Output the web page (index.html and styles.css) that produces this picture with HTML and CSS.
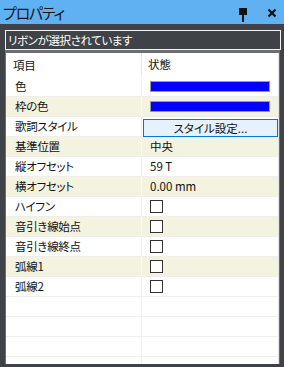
FILE: index.html
```html
<!DOCTYPE html>
<html lang="ja">
<head>
  <meta charset="UTF-8">
  <title>プロパティ</title>
  <link rel="stylesheet" href="styles.css">
</head>
<body>

<div class="titlebar">
  <span class="title">プロパティ</span>
  <span class="tools">
    <svg class="pin" width="10" height="16" viewBox="0 0 10 16">
      <rect x="1" y="1" width="8" height="7" fill="#111"/>
      <rect x="4" y="8" width="2" height="7" fill="#111"/>
    </svg>
    <svg class="close" width="10" height="10" viewBox="0 0 10 10">
      <path d="M1.5 1.5 L8.5 8.5 M8.5 1.5 L1.5 8.5" stroke="#111" stroke-width="2.2"/>
    </svg>
  </span>
</div>

<div class="status">リボンが選択されています</div>

<div class="grid">
  <div class="row head">
    <div class="name">項目</div>
    <div class="value">状態</div>
  </div>
  <div class="row">
    <div class="name">色</div>
    <div class="value"><span class="swatch"></span></div>
  </div>
  <div class="row alt">
    <div class="name">枠の色</div>
    <div class="value"><span class="swatch"></span></div>
  </div>
  <div class="row">
    <div class="name">歌詞スタイル</div>
    <div class="value btn-cell"><button class="style-btn">スタイル設定...</button></div>
  </div>
  <div class="row alt">
    <div class="name">基準位置</div>
    <div class="value">中央</div>
  </div>
  <div class="row">
    <div class="name">縦オフセット</div>
    <div class="value">59 T</div>
  </div>
  <div class="row alt">
    <div class="name">横オフセット</div>
    <div class="value">0.00 mm</div>
  </div>
  <div class="row">
    <div class="name">ハイフン</div>
    <div class="value"><span class="check"></span></div>
  </div>
  <div class="row alt">
    <div class="name">音引き線始点</div>
    <div class="value"><span class="check"></span></div>
  </div>
  <div class="row">
    <div class="name">音引き線終点</div>
    <div class="value"><span class="check"></span></div>
  </div>
  <div class="row alt">
    <div class="name">弧線1</div>
    <div class="value"><span class="check"></span></div>
  </div>
  <div class="row">
    <div class="name">弧線2</div>
    <div class="value"><span class="check"></span></div>
  </div>
  <div class="row empty"><div class="name"></div><div class="value"></div></div>
  <div class="row empty"><div class="name"></div><div class="value"></div></div>
  <div class="row empty"><div class="name"></div><div class="value"></div></div>
  <div class="row empty"><div class="name"></div><div class="value"></div></div>
</div>

</body>
</html>
```

FILE: styles.css
```css
body {
  margin: 0;
  width: 284px;
  height: 367px;
  overflow: hidden;
  background: #3f4347;
  font-family: "Noto Sans CJK JP", sans-serif;
  font-feature-settings: "palt";
  font-size: 11.5px;
  color: #111;
}

.titlebar {
  height: 24px;
  background: #60b1f2;
  display: flex;
  align-items: center;
  justify-content: space-between;
  padding: 0 7px 0 3px;
}

.title {
  font-size: 15px;
  letter-spacing: -1.2px;
  color: #151515;
}

.tools {
  display: flex;
  align-items: center;
  gap: 19px;
}

.pin {
  display: block;
  margin-top: 6px;
}

.close {
  display: block;
  margin-top: 2px;
}

.status {
  margin: 6px 3px 0 5px;
  height: 18px;
  line-height: 18px;
  border: 1px solid #f2f2f2;
  color: #fff;
  padding-left: 2px;
  letter-spacing: -0.4px;
}

.grid {
  margin: 0 4px 0 5px;
  height: 311px;
  background: #fff;
  border-top: 3px solid #6b6f73;
  border-left: 1px solid #6b6f73;
  border-right: 1px solid #6b6f73;
  overflow: hidden;
}

.row {
  display: flex;
  height: 20px;
  box-sizing: border-box;
  border-bottom: 1px solid #eeeeee;
  border-right: 1px solid #e2e2e2;
}

.row.alt {
  background: #f3f3df;
}

.name {
  width: 136px;
  border-right: 1px solid #efefef;
  padding-left: 9px;
  box-sizing: border-box;
  line-height: 19px;
  flex-shrink: 0;
  white-space: nowrap;
  letter-spacing: -0.3px;
}

.alt .name {
  border-right-color: #fafafa;
}

.value {
  flex: 1;
  padding-left: 8px;
  line-height: 19px;
  display: flex;
  align-items: center;
  white-space: nowrap;
}

.row.head {
  height: 24px;
  border-bottom-color: #fff;
}

.head .name {
  padding-left: 7px;
  line-height: 24px;
  border-right-color: #e6e6e6;
}

.head .value {
  padding-left: 6px;
}

.swatch {
  display: block;
  width: 118px;
  height: 9px;
  background: #0000ff;
  border: 1px solid #9a9a9a;
}

.btn-cell {
  padding-left: 1px;
  align-items: flex-end;
}

.style-btn {
  width: 100%;
  height: 18px;
  margin-bottom: -1px;
  padding: 0;
  background: #e5f1fb;
  border: 1px solid #0078d7;
  font-family: "Noto Sans CJK JP", sans-serif;
  font-feature-settings: "palt";
  font-size: 11.5px;
  color: #111;
  line-height: 16px;
  position: relative;
}

.check {
  display: block;
  width: 11px;
  height: 11px;
  border: 1px solid #333;
  background: #fff;
}

.row.empty .name,
.row.empty .value {
  border-right-color: #eeeeee;
}
```
